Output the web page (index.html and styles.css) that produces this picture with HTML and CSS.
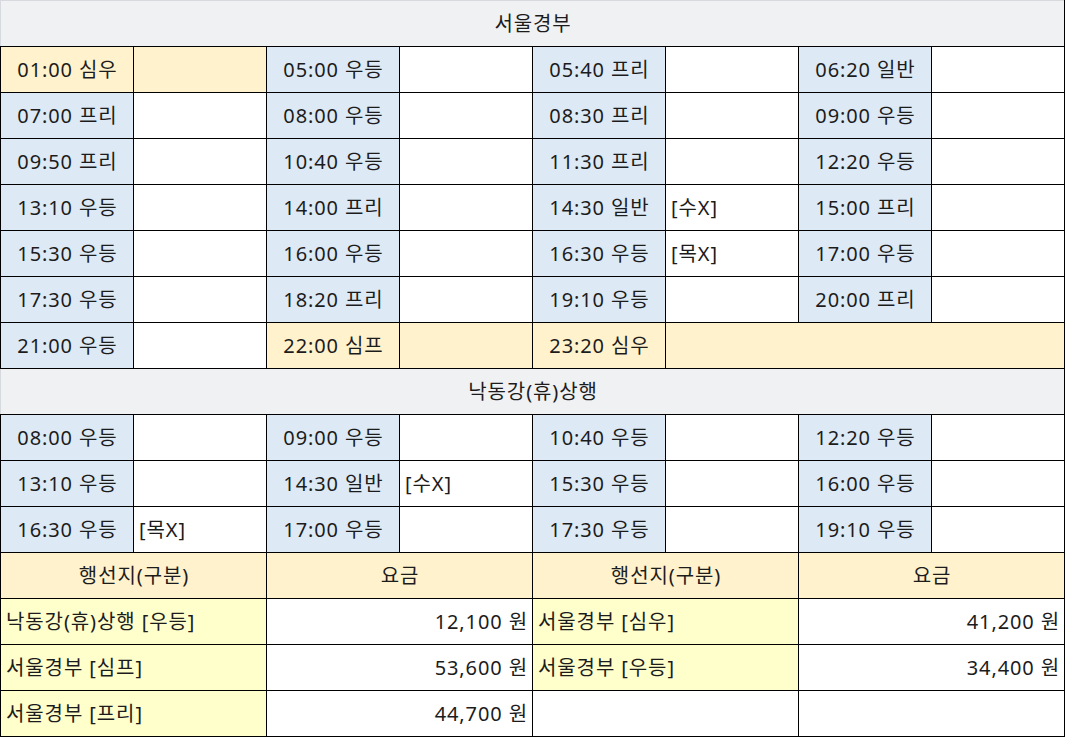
FILE: index.html
```html
<!DOCTYPE html>
<html lang="ko">
<head>
<meta charset="utf-8">
<link rel="stylesheet" href="styles.css">
</head>
<body>
<table class="sched">
  <colgroup>
    <col><col><col><col><col><col><col><col>
  </colgroup>
  <tr><td class="title" colspan="8">서울경부</td></tr>
  <tr>
    <td class="t late">01:00 심우</td><td class="n late"></td>
    <td class="t">05:00 우등</td><td class="n"></td>
    <td class="t">05:40 프리</td><td class="n"></td>
    <td class="t">06:20 일반</td><td class="n"></td>
  </tr>
  <tr>
    <td class="t">07:00 프리</td><td class="n"></td>
    <td class="t">08:00 우등</td><td class="n"></td>
    <td class="t">08:30 프리</td><td class="n"></td>
    <td class="t">09:00 우등</td><td class="n"></td>
  </tr>
  <tr>
    <td class="t">09:50 프리</td><td class="n"></td>
    <td class="t">10:40 우등</td><td class="n"></td>
    <td class="t">11:30 프리</td><td class="n"></td>
    <td class="t">12:20 우등</td><td class="n"></td>
  </tr>
  <tr>
    <td class="t">13:10 우등</td><td class="n"></td>
    <td class="t">14:00 프리</td><td class="n"></td>
    <td class="t">14:30 일반</td><td class="n">[수X]</td>
    <td class="t">15:00 프리</td><td class="n"></td>
  </tr>
  <tr>
    <td class="t">15:30 우등</td><td class="n"></td>
    <td class="t">16:00 우등</td><td class="n"></td>
    <td class="t">16:30 우등</td><td class="n">[목X]</td>
    <td class="t">17:00 우등</td><td class="n"></td>
  </tr>
  <tr>
    <td class="t">17:30 우등</td><td class="n"></td>
    <td class="t">18:20 프리</td><td class="n"></td>
    <td class="t">19:10 우등</td><td class="n"></td>
    <td class="t">20:00 프리</td><td class="n"></td>
  </tr>
  <tr>
    <td class="t">21:00 우등</td><td class="n"></td>
    <td class="t late">22:00 심프</td><td class="n late"></td>
    <td class="t late">23:20 심우</td><td class="n late" colspan="3"></td>
  </tr>
  <tr><td class="title" colspan="8">낙동강(휴)상행</td></tr>
  <tr>
    <td class="t">08:00 우등</td><td class="n"></td>
    <td class="t">09:00 우등</td><td class="n"></td>
    <td class="t">10:40 우등</td><td class="n"></td>
    <td class="t">12:20 우등</td><td class="n"></td>
  </tr>
  <tr>
    <td class="t">13:10 우등</td><td class="n"></td>
    <td class="t">14:30 일반</td><td class="n">[수X]</td>
    <td class="t">15:30 우등</td><td class="n"></td>
    <td class="t">16:00 우등</td><td class="n"></td>
  </tr>
  <tr>
    <td class="t">16:30 우등</td><td class="n">[목X]</td>
    <td class="t">17:00 우등</td><td class="n"></td>
    <td class="t">17:30 우등</td><td class="n"></td>
    <td class="t">19:10 우등</td><td class="n"></td>
  </tr>
  <tr>
    <td class="fh" colspan="2">행선지(구분)</td>
    <td class="fh" colspan="2">요금</td>
    <td class="fh" colspan="2">행선지(구분)</td>
    <td class="fh" colspan="2">요금</td>
  </tr>
  <tr>
    <td class="dest" colspan="2">낙동강(휴)상행 [우등]</td>
    <td class="fare" colspan="2">12,100 원</td>
    <td class="dest" colspan="2">서울경부 [심우]</td>
    <td class="fare" colspan="2">41,200 원</td>
  </tr>
  <tr>
    <td class="dest" colspan="2">서울경부 [심프]</td>
    <td class="fare" colspan="2">53,600 원</td>
    <td class="dest" colspan="2">서울경부 [우등]</td>
    <td class="fare" colspan="2">34,400 원</td>
  </tr>
  <tr>
    <td class="dest" colspan="2">서울경부 [프리]</td>
    <td class="fare" colspan="2">44,700 원</td>
    <td class="empty" colspan="2"></td>
    <td class="empty" colspan="2"></td>
  </tr>
</table>
</body>
</html>
```

FILE: styles.css
```css
html, body {
  margin: 0;
  padding: 0;
  background: #ffffff;
}

body {
  font-family: "Noto Sans", "Noto Sans CJK KR", sans-serif;
  font-size: 20px;
  letter-spacing: 0.9px;
  color: #1c1c1c;
}

.sched {
  border-collapse: collapse;
  table-layout: fixed;
  width: 1065px;
}

.sched col {
  width: 133px;
}

.sched td {
  border: 1px solid #000000;
  height: 45px;
  padding: 0 4px 0 5px;
  box-sizing: border-box;
  white-space: nowrap;
  overflow: hidden;
  line-height: 1;
}

.sched tr {
  height: 46px;
}

.sched td.title {
  background: #f0f1f3;
  text-align: center;
  border-top-color: #d6d9dd;
  border-left-color: #d6d9dd;
}

.sched td.t {
  background: #ddeaf6;
  text-align: center;
}

.sched td.n {
  background: #ffffff;
  text-align: left;
}

.sched td.late {
  background: #fff2cc;
}

.sched td.fh {
  background: #fff2cc;
  text-align: center;
}

.sched td.dest {
  background: #ffffcc;
  text-align: left;
}

.sched td.fare {
  background: #ffffff;
  text-align: right;
}

.sched td.empty {
  background: #ffffff;
}
```
